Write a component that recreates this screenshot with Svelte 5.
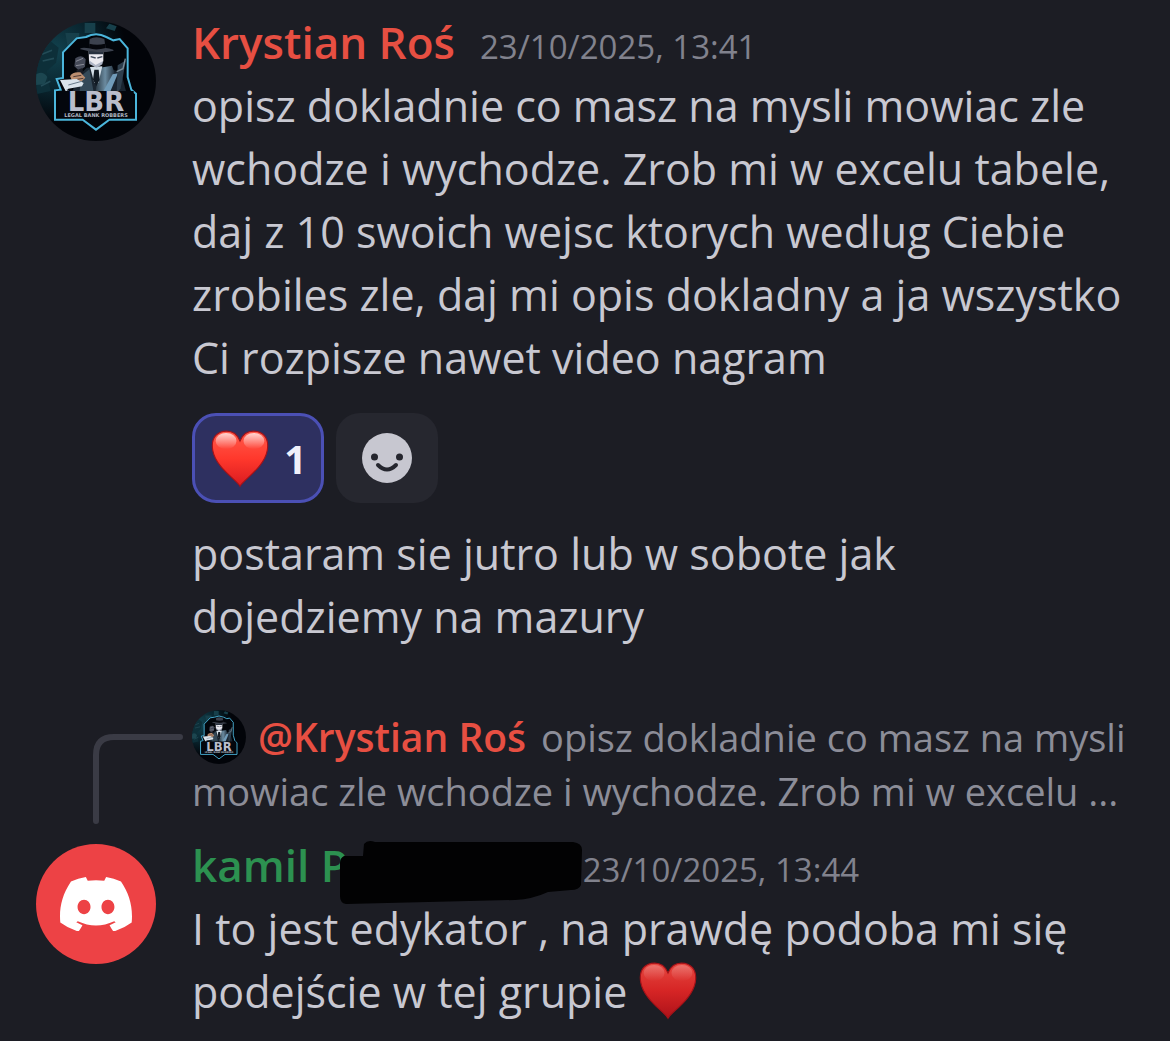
<script>
    const heartPath = 'M50 97 C43 85 8 64 3 35 C-1 12 12 2 27 2 C38 2 46 9 50 19 C54 9 62 2 73 2 C88 2 101 12 97 35 C92 64 57 85 50 97 Z';

    let reacted = $state(true);
    let count = $derived(reacted ? 1 : 0);
</script>

{#snippet robberAvatar(id)}
    <svg viewBox="30 30 360 360" role="img" aria-label="Legal Bank Robbers">
        <defs>
            <radialGradient id="{id}-bg" cx="0.15" cy="0.25" r="0.6">
                <stop offset="0" stop-color="#12434f" />
                <stop offset="0.5" stop-color="#0a2630" />
                <stop offset="1" stop-color="#020409" />
            </radialGradient>
            <linearGradient id="{id}-coat" x1="0" x2="1">
                <stop offset="0" stop-color="#26343f" />
                <stop offset="0.5" stop-color="#6b8ba0" />
                <stop offset="1" stop-color="#1b2733" />
            </linearGradient>
            <clipPath id="{id}-clip"><circle cx="210" cy="210" r="180" /></clipPath>
        </defs>
        <g clip-path="url(#{id}-clip)">
            <rect x="30" y="30" width="360" height="360" fill="url(#{id}-bg)" />
            <path d="M30 110 L70 88 L98 110 L90 155 L62 180 L74 240 L30 250 Z" fill="#0d2f39" />
            <path d="M48 130 l30 -12 M50 150 l34 -8 M45 225 l28 -14" stroke="#234b56" stroke-width="5" />
            <path d="M118 66 h42 v26 l-34 22 z M176 36 h32 v30 h-32 z M250 38 l22 8 -6 14 -26 -8z" fill="#17404b" />
            <path d="M30 190 q20 -12 34 8 l-8 22 -26 2 z" fill="#1c4650" />
            <path
                d="M180 78 Q210 62 241 78 L262 88 L281 84 L305 112 L305 198 L316 236 L330 248 L330 326 L250 326 L210 356 L170 326 L87 326 L87 238 L104 236 L92 204 L111 201 L111 124 L152 82 Z"
                fill="#02050a" stroke="#4bb6dc" stroke-width="6"
            />
            <path d="M182 170 L236 168 L285 184 L302 248 L136 248 L158 195 Z" fill="#1a2530" />
            <path d="M166 194 L190 175 L204 248 L160 248 Z" fill="#344958" />
            <path d="M222 170 L258 164 L268 192 L236 248 L207 248 Z" fill="url(#{id}-coat)" />
            <path d="M260 190 L276 187 L250 248 L228 248 Z" fill="#719cb9" />
            <path d="M275 163 L300 148 L284 232 L272 248 Z" fill="#2d3e4c" />
            <path d="M298 143 l-7 30 -19 9" fill="none" stroke="#788995" stroke-width="4" />
            <path d="M192 168 L229 166 L217 216 L205 216 Z" fill="#d4dfe8" />
            <path d="M205 176 h13 l3 30 -10 19 -10 -19 z" fill="#111a23" />
            <path d="M188 118 h44 v33 l-21 19 -22 -18 z" fill="#ebeaf0" />
            <path d="M188 118 h44 v12 h-44 z" fill="#27313f" />
            <path d="M194 137 l15 4 M214 141 l15 -4" stroke="#414b5b" stroke-width="4" />
            <path d="M189 148 l20 14 22 -12 -2 10 -17 10 -22 -11z" fill="#aeb5c5" />
            <path d="M189 112 L191 84 Q211 74 235 84 L239 111 Q263 114 263 119 Q214 131 161 114 Q169 107 189 112 Z" fill="#3c424e" />
            <path d="M190 98 Q213 104 237 98 L239 111 Q211 119 189 112 Z" fill="#05070c" />
            <path d="M148 142 q20 -14 31 3 l-2 22 -17 13 -15 -14 z" fill="#454a58" />
            <path d="M150 151 l21 -9 M150 164 l24 -4" stroke="#8b8e99" stroke-width="3" />
            <path d="M151 178 l18 -7 3 17 -17 7z" fill="#191c25" />
            <path d="M132 196 Q140 181 163 184 L178 200 L164 214 L139 211 Z" fill="#bb8e70" />
            <path d="M142 197 l24 -4 M147 206 l25 -4" stroke="#4f3b36" stroke-width="3" />
            <path d="M102 207 L152 204 L173 216 L168 226 L127 233 L120 242 Z" fill="#dae3eb" />
            <path d="M127 222 l40 -11 M123 234 l6 10" stroke="#687989" stroke-width="3" />
            <rect x="97" y="240" width="226" height="78" fill="#04070d" />
            <text class="logo-name" x="210" y="300" text-anchor="middle">LBR</text>
            <text class="logo-tag" x="210" y="319" text-anchor="middle">LEGAL BANK ROBBERS</text>
        </g>
    </svg>
{/snippet}

{#snippet heart(id, top, middle, bottom, shine)}
    <svg class="heart" viewBox="0 0 100 100" role="img" aria-label="heart">
        <defs>
            <linearGradient id="{id}-fill" x2="0" y2="1">
                <stop offset="0" stop-color={top} />
                <stop offset="0.5" stop-color={middle} />
                <stop offset="1" stop-color={bottom} />
            </linearGradient>
            <linearGradient id="{id}-shine" x2="0" y2="1">
                <stop offset="0" stop-color="#fff" stop-opacity={shine} />
                <stop offset="1" stop-color="#fff" stop-opacity="0" />
            </linearGradient>
        </defs>
        <path d={heartPath} fill="url(#{id}-fill)" stroke="#a51218" stroke-width="2" />
        <ellipse cx="26" cy="19" rx="18" ry="14" fill="url(#{id}-shine)" />
        <ellipse cx="74" cy="19" rx="18" ry="14" fill="url(#{id}-shine)" />
    </svg>
{/snippet}

<main class="chat">
    <article class="message">
        <div class="avatar">{@render robberAvatar('author')}</div>
        <div class="body">
            <header>
                <span class="name red">Krystian Roś</span>
                <time datetime="2025-10-23T13:41">23/10/2025, 13:41</time>
            </header>
            <p>
                opisz dokladnie co masz na mysli mowiac zle<br />
                wchodze i wychodze. Zrob mi w excelu tabele,<br />
                daj z 10 swoich wejsc ktorych wedlug Ciebie<br />
                zrobiles zle, daj mi opis dokladny a ja wszystko<br />
                Ci rozpisze nawet video nagram
            </p>
            <div class="reactions">
                <button class="reaction" class:active={reacted} onclick={() => (reacted = !reacted)}>
                    {@render heart('reaction', '#ff5b4c', '#ff382c', '#d91b20', 0.75)}
                    <span>{count}</span>
                </button>
                <button class="reaction add" aria-label="Add reaction">
                    <svg viewBox="0 0 50 50" aria-hidden="true">
                        <circle cx="25" cy="25" r="25" fill="#c7c7d0" />
                        <circle cx="12.5" cy="24" r="3.5" fill="#25262e" />
                        <circle cx="37.5" cy="24" r="3.5" fill="#25262e" />
                        <path d="M16 32 Q25 41 34 32" fill="none" stroke="#25262e" stroke-width="4" stroke-linecap="round" />
                    </svg>
                </button>
            </div>
            <p>
                postaram sie jutro lub w sobote jak<br />
                dojedziemy na mazury
            </p>
        </div>
    </article>

    <article class="message reply">
        <svg class="spine" viewBox="0 0 90 90" aria-hidden="true">
            <path d="M3 87 V21 Q3 3 21 3 H87" />
        </svg>
        <div class="quote">
            <div class="quote-line">
                <span class="mini-avatar">{@render robberAvatar('quoted')}</span>
                <a class="mention" href="#krystian">@Krystian Roś</a>
                <span>opisz dokladnie co masz na mysli</span>
            </div>
            <div>mowiac zle wchodze i wychodze. Zrob mi w excelu ...</div>
        </div>
        <div class="avatar discord">
            <svg viewBox="0 0 127.14 96.36" role="img" aria-label="Discord">
                <path
                    fill="#fff"
                    d="M107.7,8.07A105.15,105.15,0,0,0,81.47,0a72.06,72.06,0,0,0-3.36,6.83A97.68,97.68,0,0,0,49,6.83,72.37,72.37,0,0,0,45.64,0,105.89,105.89,0,0,0,19.39,8.09C2.79,32.65-1.71,56.6.54,80.21h0A105.73,105.73,0,0,0,32.71,96.36,77.7,77.7,0,0,0,39.6,85.25a68.42,68.42,0,0,1-10.85-5.18c.91-.66,1.8-1.34,2.66-2a75.57,75.57,0,0,0,64.32,0c.87.71,1.76,1.39,2.66,2a68.68,68.68,0,0,1-10.87,5.19,77,77,0,0,0,6.89,11.1A105.25,105.25,0,0,0,126.6,80.22h0C129.24,52.84,122.09,29.11,107.7,8.07ZM42.45,65.69C36.18,65.69,31,60,31,53s5-12.74,11.43-12.74S54,46,53.89,53,48.84,65.69,42.45,65.69Zm42.24,0C78.41,65.69,73.25,60,73.25,53s5-12.74,11.44-12.74S96.23,46,96.12,53,91.04,65.69,84.69,65.69Z"
                />
            </svg>
        </div>
        <div class="body">
            <header>
                <span class="name green">kamil P</span>
                <svg class="marker" viewBox="0 0 246 66" aria-hidden="true">
                    <path d="M7 17 L26 17 L27 5 Q31 0 38 3 L236 3 Q245 4 245 11 L244 46 Q242 51 234 51 L211 53 Q196 60 178 61 L9 65 Q3 64 3 57 L3 24 Q3 19 7 17 Z" />
                </svg>
                <time datetime="2025-10-23T13:44">23/10/2025, 13:44</time>
            </header>
            <p>
                I to jest edykator , na prawdę podoba mi się<br />
                podejście w tej grupie {@render heart('inline', '#e6473f', '#d62525', '#ad1219', 0.25)}
            </p>
        </div>
    </article>
</main>

<style>
    :global(body) {
        margin: 0;
        background-color: #1c1d24;
    }

    .chat {
        min-height: 100vh;
        box-sizing: border-box;
        padding: 11px 36px 15px;
        background-color: #1c1d24;
        color: #c8c8d1;
        font-family: 'Open Sans', 'Noto Sans', sans-serif;
        font-weight: 400;
        font-size: 43px;
        line-height: 63px;
    }

    .message {
        display: grid;
        grid-template-columns: 120px 1fr;
        column-gap: 36px;
    }

    .reply {
        margin-top: 62px;
        row-gap: 16px;
    }

    .avatar {
        width: 120px;
        height: 120px;
        margin-top: 10px;
        border-radius: 50%;
    }

    .avatar svg,
    .mini-avatar svg {
        display: block;
        width: 100%;
    }

    .logo-name {
        font-family: 'DejaVu Sans', sans-serif;
        font-weight: 700;
        font-size: 78px;
        fill: #b9bdcb;
    }

    .logo-tag {
        font-family: 'DejaVu Sans', sans-serif;
        font-weight: 700;
        font-size: 15px;
        fill: #aeb5c0;
    }

    .discord {
        display: flex;
        align-items: center;
        justify-content: center;
        background-color: #ed4245;
    }

    .discord svg {
        width: 72px;
    }

    .body {
        min-width: 0;
        white-space: nowrap;
    }

    header {
        display: flex;
        align-items: baseline;
        height: 63px;
    }

    .name {
        font-size: 44px;
        font-weight: 600;
    }

    .red,
    .mention {
        color: #e74f42;
    }

    .green {
        color: #2c9150;
    }

    time {
        margin-left: 25px;
        color: #81828d;
        font-size: 33px;
        font-weight: 400;
    }

    .marker {
        position: relative;
        align-self: flex-end;
        width: 246px;
        height: 66px;
        margin: 0 0 -8px -11px;
        fill: #020203;
    }

    .marker + time {
        margin-left: 0;
    }

    p {
        margin: 0;
    }

    .reactions {
        display: flex;
        gap: 12px;
        margin: 24px 0 19px;
    }

    .reaction {
        display: flex;
        align-items: center;
        justify-content: center;
        gap: 15px;
        box-sizing: border-box;
        width: 132px;
        height: 90px;
        padding: 2px 0 0 2px;
        border: 3px solid transparent;
        border-radius: 24px;
        background-color: #26272f;
        color: #f0f0fa;
        font-family: inherit;
        font-size: 39px;
        font-weight: 700;
        line-height: 54px;
        cursor: pointer;
    }

    .reaction.active {
        border-color: #4b50b5;
        background-color: #2e3060;
    }

    .reaction.add {
        width: 102px;
        padding: 0;
    }

    .add svg {
        width: 50px;
    }

    .heart {
        width: 58px;
        height: 58px;
    }

    p .heart {
        vertical-align: -12px;
    }

    .spine {
        justify-self: end;
        width: 90px;
        height: 90px;
        margin: 24px -27px -6px 0;
        fill: none;
        stroke: #3a3b45;
        stroke-width: 6px;
        stroke-linecap: round;
    }

    .quote {
        color: #8c8d98;
        font-size: 38px;
        line-height: 54px;
        white-space: nowrap;
    }

    .quote-line {
        display: flex;
    }

    .mini-avatar {
        width: 54px;
        height: 54px;
    }

    .mention {
        margin: 0 15px 0 12px;
        font-size: 39px;
        font-weight: 600;
        text-decoration: none;
    }
</style>
